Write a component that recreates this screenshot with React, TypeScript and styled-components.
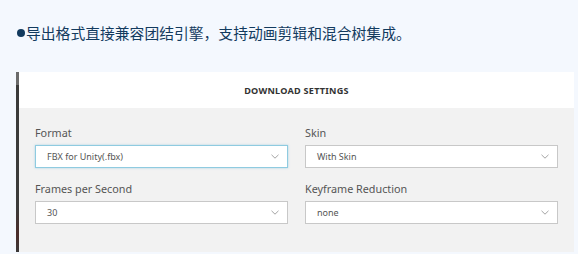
import React from "react";
import styled, { createGlobalStyle } from "styled-components";

const Global = createGlobalStyle`
  html, body { margin: 0; padding: 0; background: #f4f8fe; }
  body { width: 578px; height: 254px; overflow: hidden; }
`;

const Page = styled.div`
  display: flex;
  flex-direction: column;
  padding-top: 24px;
`;

const Bullet = styled.p`
  margin: 0 0 0 17px;
  display: flex;
  align-items: center;
  font-family: "Noto Sans CJK SC", "Noto Sans", sans-serif;
  font-size: 14.8px;
  line-height: 18px;
  color: #123a5e;
`;

const Dot = styled.span`
  display: inline-block;
  width: 8px;
  height: 8px;
  border-radius: 50%;
  background: #123a5e;
  margin-right: 1px;
`;

const Panel = styled.section`
  margin: 30px 0 0 16px;
  width: 555px;
  border-left: 3px solid;
  border-image: linear-gradient(#6a6a6a 0 14px, #3a3a3a 14px 75%, #4a2c2a 90%, #3a3a3a) 1;
  display: flex;
  flex-direction: column;
  font-family: "Noto Sans", "Open Sans", sans-serif;
`;

const Header = styled.div`
  height: 36px;
  background: #ffffff;
  display: flex;
  align-items: center;
  justify-content: center;
  font-size: 9.1px;
  font-weight: 700;
  color: #333;
  letter-spacing: 0.25px;
`;

const Body = styled.div`
  background: #f2f2f2;
  padding: 18px 16px 28px 16px;
  display: grid;
  grid-template-columns: 1fr 1fr;
  column-gap: 17px;
  row-gap: 14px;
`;

const Field = styled.div`
  display: flex;
  flex-direction: column;
  gap: 5px;
`;

const Label = styled.label`
  font-size: 10.8px;
  line-height: 14px;
  color: #555;
`;

const Select = styled.div<{ $focus?: boolean }>`
  height: 23px;
  box-sizing: border-box;
  background: #fff;
  border: 1px solid ${(p) => (p.$focus ? "#8fcbe0" : "#c8c8c8")};
  box-shadow: ${(p) => (p.$focus ? "0 0 2px rgba(120,190,220,0.6)" : "none")};
  display: flex;
  align-items: center;
  justify-content: space-between;
  padding: 0 8px 0 11px;
  font-size: 9px;
  color: #555;
`;

const Chevron = () => (
  <svg width="8" height="5" viewBox="0 0 8 5">
    <path d="M0.5 0.8 L4 4.2 L7.5 0.8" fill="none" stroke="#9a9a9a" strokeWidth="0.9" />
  </svg>
);

const fields = [
  { label: "Format", value: "FBX for Unity(.fbx)", focus: true },
  { label: "Skin", value: "With Skin" },
  { label: "Frames per Second", value: "30" },
  { label: "Keyframe Reduction", value: "none" },
];

export default function App() {
  return (
    <Page>
      <Global />
      <Bullet>
        <Dot />
        导出格式直接兼容团结引擎，支持动画剪辑和混合树集成。
      </Bullet>
      <Panel>
        <Header>DOWNLOAD SETTINGS</Header>
        <Body>
          {fields.map((f) => (
            <Field key={f.label}>
              <Label>{f.label}</Label>
              <Select $focus={f.focus}>
                <span>{f.value}</span>
                <Chevron />
              </Select>
            </Field>
          ))}
        </Body>
      </Panel>
    </Page>
  );
}
